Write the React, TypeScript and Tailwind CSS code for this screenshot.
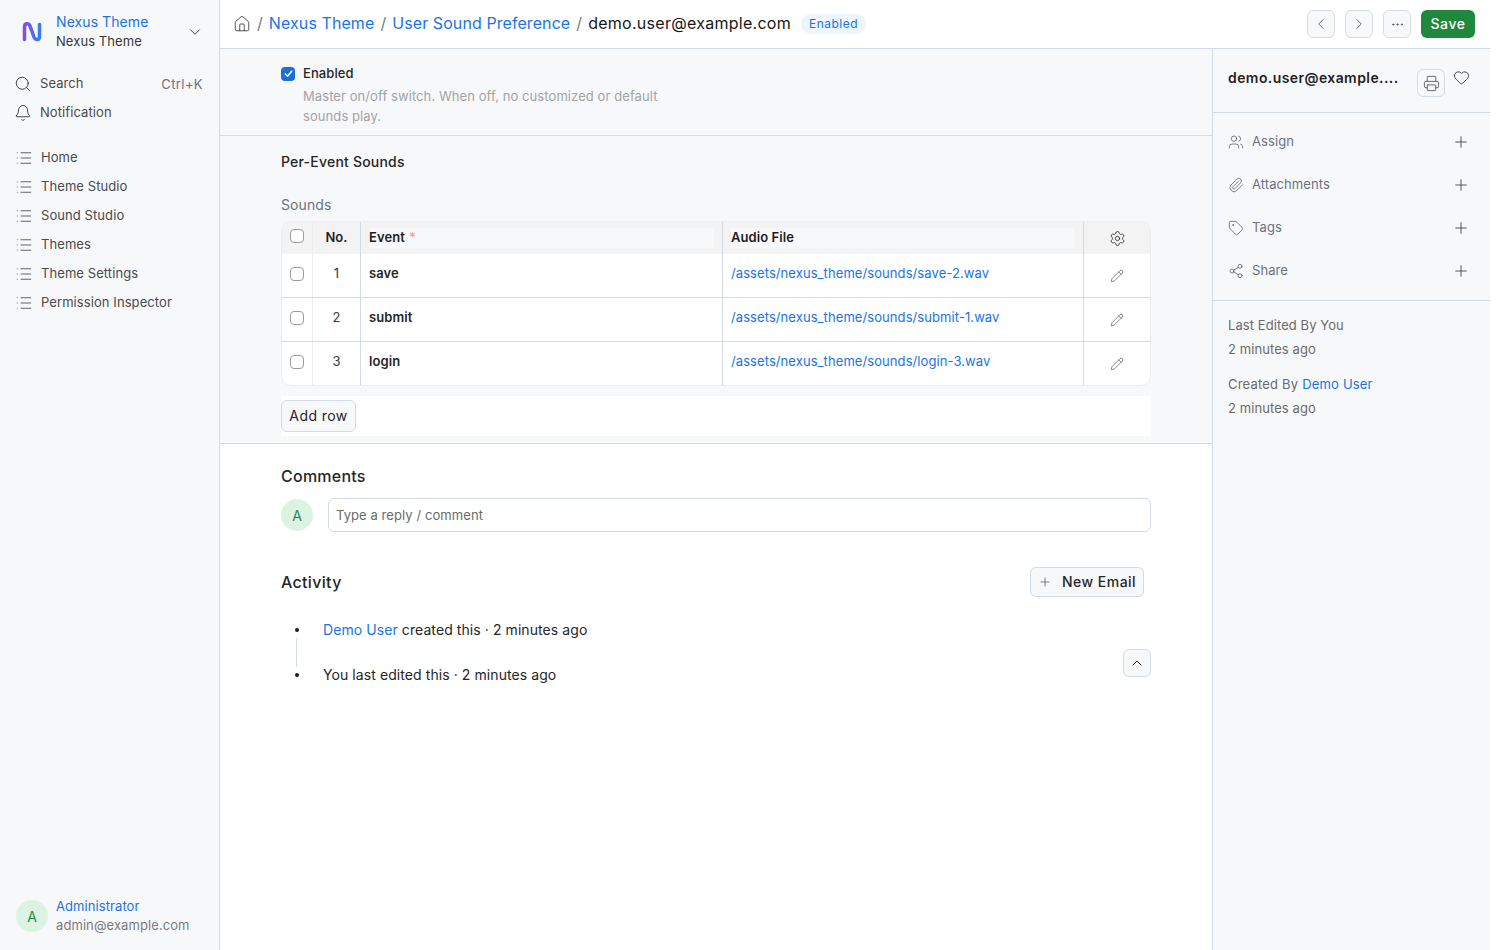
import {
  Bell,
  ChevronDown,
  ChevronLeft,
  ChevronRight,
  ChevronUp,
  Ellipsis,
  Heart,
  House,
  List,
  Paperclip,
  Pencil,
  Plus,
  Printer,
  Search,
  Settings,
  Share2,
  Tag,
  Users,
} from "lucide-react";

const navItems = ["Home", "Theme Studio", "Sound Studio", "Themes", "Theme Settings", "Permission Inspector"];

const rows = [
  { no: 1, event: "save", file: "/assets/nexus_theme/sounds/save-2.wav" },
  { no: 2, event: "submit", file: "/assets/nexus_theme/sounds/submit-1.wav" },
  { no: 3, event: "login", file: "/assets/nexus_theme/sounds/login-3.wav" },
];

const sideActions = [
  { label: "Assign", icon: Users },
  { label: "Attachments", icon: Paperclip },
  { label: "Tags", icon: Tag },
  { label: "Share", icon: Share2 },
];

function Logo() {
  return (
    <svg width="22" height="22" viewBox="0 0 22 22" fill="none">
      <defs>
        <linearGradient id="nx" x1="1" y1="0" x2="21" y2="0" gradientUnits="userSpaceOnUse">
          <stop offset="0" stopColor="#8b45f5" />
          <stop offset="1" stopColor="#2b84f7" />
        </linearGradient>
      </defs>
      <path
        d="M3.5 18.5V6C3.5 2.2 7.6 1.8 9 4.8L13 16.2C14.4 19.6 18.5 19.4 18.5 15.5V3.5"
        stroke="url(#nx)"
        strokeWidth="3.5"
        strokeLinecap="round"
      />
    </svg>
  );
}

function Checkbox() {
  return <div className="w-[14px] h-[14px] rounded-[4px] border border-[#9a9a9a] bg-white" />;
}

function IconButton({ children }: { children: React.ReactNode }) {
  return (
    <button className="w-7 h-7 flex items-center justify-center rounded-md border border-[#d5dce5] bg-[#f7f8fa] text-[#4b5563]">
      {children}
    </button>
  );
}

function Sidebar() {
  return (
    <aside className="w-[220px] shrink-0 h-full flex flex-col bg-[#f7f8fa] border-r border-[#d1dae6]">
      <div className="flex items-center pl-[21px] pr-[15px] pt-[13px] h-[50px]">
        <Logo />
        <div className="ml-[13px] flex-1">
          <div className="text-[14px] leading-[18px] text-[#1a73e8]">Nexus Theme</div>
          <div className="text-[13px] leading-[18px] mt-[1px] text-[#383838]">Nexus Theme</div>
        </div>
        <ChevronDown size={18} strokeWidth={1.1} className="text-[#222]" />
      </div>
      <div className="mt-[19px] pl-[14px] pr-4 text-[13px] text-[#4a4a4a]">
        <div className="h-[29px] flex items-center">
          <Search size={18} strokeWidth={1.1} className="text-[#222]" />
          <span className="ml-2 flex-1">Search</span>
          <span className="text-[#6b7280] mt-[3px] tracking-[0.03em]">Ctrl+K</span>
        </div>
        <div className="h-[29px] flex items-center">
          <Bell size={18} strokeWidth={1.1} className="text-[#222]" />
          <span className="ml-2">Notification</span>
        </div>
      </div>
      <nav className="mt-[16px] pl-[15px] text-[13px] text-[#4a4a4a]">
        {navItems.map((item) => (
          <div key={item} className="h-[29px] flex items-center">
            <List size={18} strokeWidth={1.1} className="text-[#444]" />
            <span className="ml-2">{item}</span>
          </div>
        ))}
      </nav>
      <div className="mt-auto mb-[15px] px-4 flex items-center">
        <div className="w-8 h-8 rounded-full bg-[#dcf3e3] text-[#1f8a4c] text-[14px] flex items-center justify-center">
          A
        </div>
        <div className="ml-2">
          <div className="text-[13px] leading-[18px] text-[#1a73e8]">Administrator</div>
          <div className="text-[13px] leading-[20px] text-[#7c7c7c]">admin@example.com</div>
        </div>
      </div>
    </aside>
  );
}

function Header() {
  return (
    <header className="h-[49px] shrink-0 flex items-center pl-[13px] pr-[15px] bg-white border-b border-[#d1dae6]">
      <House size={18} strokeWidth={1.1} className="text-[#333]" />
      <div className="ml-[6px] pb-[2px] flex items-center gap-[6px] text-[16px] font-normal">
        <span className="text-[#7c7c7c]">/</span>
        <span className="text-[#1a73e8]">Nexus Theme</span>
        <span className="text-[#7c7c7c]">/</span>
        <span className="text-[#1a73e8]">User Sound Preference</span>
        <span className="text-[#7c7c7c]">/</span>
        <span className="text-[#171717] tracking-[0.017em]">demo.user@example.com</span>
      </div>
      <span className="ml-[10px] h-5 px-2 flex items-center rounded-full bg-[#edf5fd] text-[12px] tracking-[0.04em] text-[#1a73e8]">
        Enabled
      </span>
      <div className="ml-auto flex items-center gap-[10px]">
        <IconButton>
          <ChevronLeft size={18} strokeWidth={1.1} />
        </IconButton>
        <IconButton>
          <ChevronRight size={18} strokeWidth={1.1} />
        </IconButton>
        <IconButton>
          <Ellipsis size={15} strokeWidth={1.5} />
        </IconButton>
        <button className="w-[54px] h-7 pb-[2px] rounded-md bg-[#1f883d] text-white text-[14px] font-medium tracking-[0.04em]">
          Save
        </button>
      </div>
    </header>
  );
}

function SoundsTable() {
  return (
    <div className="mt-[6px] rounded-[10px] border border-[#ebedef] bg-white overflow-hidden text-[13px]">
      <div className="h-[32px] flex bg-[#f3f3f3] font-semibold text-[#1f1f1f]">
        <div className="w-[30px] shrink-0 pl-2 pt-[7px]">
          <Checkbox />
        </div>
        <div className="w-[49px] shrink-0 flex items-center justify-center border-l border-[#ededed] border-r-[#d1dae6] border-r">
          No.
        </div>
        <div className="w-[362px] shrink-0 border-r border-[#d1dae6] flex items-center pl-2 pr-2">
          <div className="h-5 flex-1 flex items-center bg-[#f7f8fa]">
            Event<span className="ml-1 text-[#f5a3a3]">*</span>
          </div>
        </div>
        <div className="w-[361px] shrink-0 border-r border-[#d1dae6] flex items-center pl-2 pr-2">
          <div className="h-5 flex-1 flex items-center bg-[#f7f8fa]">Audio File</div>
        </div>
        <div className="flex-1 flex items-center justify-center">
          <Settings size={17} strokeWidth={1.1} className="text-[#222]" />
        </div>
      </div>
      {rows.map((row, i) => (
        <div key={row.no} className={i > 0 ? "h-[44px] flex border-t border-[#d1dae6]" : "h-[43px] flex"}>
          <div className="w-[30px] shrink-0 pl-2 pt-[13px]">
            <Checkbox />
          </div>
          <div className="w-[49px] shrink-0 flex justify-center pt-[10px] border-l border-[#ededed] border-r-[#d1dae6] border-r text-[#383838]">
            {row.no}
          </div>
          <div className="w-[362px] shrink-0 border-r border-[#d1dae6] pl-2 pt-[10px] font-semibold text-[#262626]">
            {row.event}
          </div>
          <div className="w-[361px] shrink-0 border-r border-[#d1dae6] pl-2 pt-[10px] text-[#1a73e8]">{row.file}</div>
          <div className="flex-1 flex justify-center pt-[15px]">
            <Pencil size={14} strokeWidth={1} className="text-[#333]" />
          </div>
        </div>
      ))}
    </div>
  );
}

function FormArea() {
  return (
    <div className="shrink-0 bg-[#f7f8fa] border-b border-[#d1dae6] h-[395px]">
      <div className="h-[87px] border-b border-[#d8dde3] pl-[61px] pt-[15px]">
        <div className="flex items-center">
          <div className="w-[14px] h-[14px] rounded-[4px] bg-[#1a6fdc] flex items-center justify-center">
            <svg width="9" height="9" viewBox="0 0 10 10" fill="none">
              <path d="M1.5 5.5L4 8L8.5 2.5" stroke="white" strokeWidth="1.8" strokeLinecap="round" strokeLinejoin="round" />
            </svg>
          </div>
          <span className="ml-2 text-[13px] font-medium text-[#262626]">Enabled</span>
        </div>
        <p className="ml-[22px] mt-[2px] w-[370px] text-[13px] leading-[20px] text-[#a3a3a3]">
          Master on/off switch. When off, no customized or default sounds play.
        </p>
      </div>
      <div className="pl-[61px] pr-[61px]">
        <h3 className="mt-[16px] text-[14px] leading-5 font-medium tracking-[0.015em] text-[#262626]">Per-Event Sounds</h3>
        <div className="mt-[23px] text-[14px] leading-5 text-[#6b7280]">Sounds</div>
        <SoundsTable />
        <div className="mt-[10px] h-10 bg-white flex items-center">
          <button className="w-[75px] h-8 pb-[1px] rounded-md border border-[#d1dae6] bg-[#f7f8fa] text-[14px] tracking-[0.03em] text-[#262626]">
            Add row
          </button>
        </div>
      </div>
    </div>
  );
}

function CommentsAndActivity() {
  return (
    <div className="pl-[61px] pr-[61px]">
      <h3 className="mt-[20px] text-[16px] leading-6 font-medium tracking-[0.015em] text-[#262626]">Comments</h3>
      <div className="mt-[10px] flex items-center">
        <div className="w-8 h-8 rounded-full bg-[#dcf3e3] text-[#1f8a4c] text-[14px] flex items-center justify-center">
          A
        </div>
        <div className="ml-[15px] flex-1 h-[34px] flex items-center rounded-md border border-[#d1dae6] pl-[7px] pt-[1px] text-[13px] text-[#6b6b6b]">
          Type a reply / comment
        </div>
      </div>
      <div className="mt-[35px] flex items-center justify-between pr-[7px]">
        <h3 className="text-[16px] font-medium tracking-[0.02em] text-[#262626]">Activity</h3>
        <button className="w-[114px] h-[30px] pb-[1px] flex items-center justify-center gap-[10px] rounded-md border border-[#d1dae6] bg-[#f7f8fa] text-[14px] font-medium tracking-[0.035em] text-[#262626]">
          <Plus size={14} strokeWidth={1.25} className="text-[#555]" />
          New Email
        </button>
      </div>
      <div className="mt-[23px] flex text-[14px] text-[#262626]">
        <div className="w-[42px] shrink-0 flex flex-col items-start pl-[14px] pt-[8px]">
          <div className="w-[4px] h-[4px] rounded-full bg-[#1f1f1f]" />
          <div className="ml-[1px] mt-[6px] h-[29px] w-px bg-[#d1dae6]" />
          <div className="mt-[6px] w-[4px] h-[4px] rounded-full bg-[#1f1f1f]" />
        </div>
        <div className="flex-1">
          <div className="leading-5">
            <span className="text-[#1a73e8]">Demo User</span> created this · 2 minutes ago
          </div>
          <div className="mt-[25px] leading-5">You last edited this · 2 minutes ago</div>
        </div>
        <div className="mt-[29px]">
          <IconButton>
            <ChevronUp size={16} strokeWidth={1.5} className="text-[#222]" />
          </IconButton>
        </div>
      </div>
    </div>
  );
}

function RightPanel() {
  return (
    <aside className="w-[278px] shrink-0 bg-[#f7f8fa] border-l border-[#d1dae6]">
      <div className="h-[64px] flex items-start border-b border-[#d1dae6] pl-[15px] pr-[20px]">
        <div className="mt-[19px] flex-1 text-[14px] leading-5 font-semibold tracking-[0.03em] text-[#1f1f1f]">demo.user@example....</div>
        <div className="mt-[20px]">
          <IconButton>
            <Printer size={17} strokeWidth={1.2} />
          </IconButton>
        </div>
        <Heart size={17} strokeWidth={1.1} className="ml-[8px] mt-[20px] text-[#222]" />
      </div>
      <div className="h-[188px] border-b border-[#d1dae6] pl-[15px] pr-[20px] pt-[7px]">
        {sideActions.map(({ label, icon: Icon }) => (
          <div key={label} className="h-[43px] flex items-center text-[13px] text-[#6b7280]">
            <Icon size={16} strokeWidth={1} className="text-[#444]" />
            <span className="ml-2 flex-1">{label}</span>
            <Plus size={18} strokeWidth={1.2} className="text-[#444]" />
          </div>
        ))}
      </div>
      <div className="pl-[15px] pt-[12px] text-[13px] text-[#6b6b6b]">
        <div className="leading-6">Last Edited By You</div>
        <div className="leading-6">2 minutes ago</div>
        <div className="mt-[11px] leading-6 tracking-[0.015em]">
          Created By <span className="text-[#1a73e8]">Demo User</span>
        </div>
        <div className="leading-6">2 minutes ago</div>
      </div>
    </aside>
  );
}

export default function App() {
  return (
    <div className="w-[1490px] h-[950px] flex bg-white tracking-[0.005em] overflow-hidden font-['Inter',sans-serif]">
      <Sidebar />
      <div className="flex-1 min-w-0 flex flex-col">
        <Header />
        <div className="flex-1 flex min-h-0">
          <main className="flex-1 min-w-0">
            <FormArea />
            <CommentsAndActivity />
          </main>
          <RightPanel />
        </div>
      </div>
    </div>
  );
}
